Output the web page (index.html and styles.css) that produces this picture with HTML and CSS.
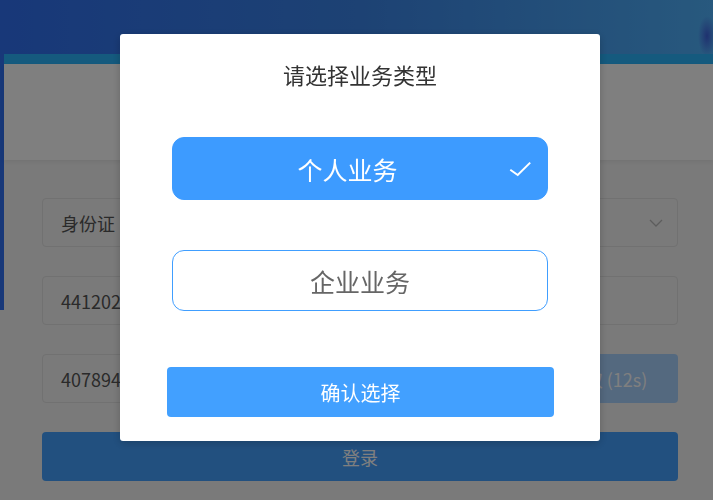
FILE: index.html
```html
<!DOCTYPE html>
<html lang="zh-CN">

<head>
    <meta charset="UTF-8">
    <meta name="viewport" content="width=device-width, initial-scale=1.0">
    <title>登录 - 选择业务类型</title>
    <link rel="stylesheet" href="styles.css">
</head>

<body>
    <div class="page">
        <div class="card">
            <div class="card_head"></div>
            <form class="login_form">
                <div class="field field_select">
                    <span>身份证</span>
                    <svg class="chevron" width="14" height="8" viewBox="0 0 14 8">
                        <polyline points="1,1 7,7 13,1" fill="none" stroke="#bbbbbb" stroke-width="1.3" />
                    </svg>
                </div>
                <div class="field">
                    <span>441202199001011234</span>
                </div>
                <div class="code_row">
                    <div class="field">
                        <span>407894</span>
                    </div>
                    <button type="button" class="code_btn">重新获取 (12s)</button>
                </div>
                <button type="button" class="login_btn">登录</button>
            </form>
        </div>
    </div>

    <!-- business type dialog -->
    <div class="overlay">
        <div class="dialog">
            <h2 class="dialog_title">请选择业务类型</h2>
            <div class="option option_active">
                个人业务
                <svg class="check" width="22" height="16" viewBox="0 0 22 16">
                    <polyline points="1.3,8.7 8.7,14 21.2,1.6" fill="none" stroke="#ffffff" stroke-width="2" />
                </svg>
            </div>
            <div class="option">企业业务</div>
            <button type="button" class="confirm_btn">确认选择</button>
        </div>
    </div>
</body>

</html>
```

FILE: styles.css
```css
/* Reset some default browser styles */
body,
html {
    margin: 0;
    padding: 0;
    font-family: "Microsoft YaHei", "Noto Sans CJK SC", sans-serif;
    height: 100%;
    overflow: hidden;
}

.page {
    height: 100%;
    background:
        radial-gradient(ellipse 9px 20px at 707px 36px, rgba(60, 90, 220, 0.9) 0%, rgba(70, 120, 230, 0.6) 55%, rgba(80, 176, 252, 0) 100%) no-repeat,
        linear-gradient(90deg, #3070f2 0%, #3a84e8 50%, #50b2fc 100%) top / 100% 310px no-repeat,
        #f4f4f4;
    padding-top: 54px;
    box-sizing: border-box;
}

.card {
    margin-left: 4px;
    background: #f4f4f4;
    border-top: 10px solid #2ab4fc;
    height: 436px;
}

.card_head {
    height: 96px;
    background: #ffffff;
    box-shadow: 0 2px 4px rgba(0, 0, 0, 0.06);
}

.login_form {
    display: flex;
    flex-direction: column;
    gap: 29px;
    padding: 38px 35px 0 38px;
}

.field {
    height: 49px;
    box-sizing: border-box;
    border: 1px solid #e2e2e2;
    border-radius: 4px;
    display: flex;
    align-items: center;
    justify-content: space-between;
    padding: 0 14px 0 18px;
    font-size: 18px;
    color: #555555;
}

.code_row {
    display: flex;
    gap: 10px;
}

.code_row .field {
    flex: 1;
}

.code_btn {
    width: 200px;
    height: 49px;
    border: none;
    border-radius: 4px;
    background: #a8d2ff;
    color: #ffffff;
    font-family: inherit;
    font-size: 18px;
    padding: 0 0 0 22px;
}

.login_btn {
    height: 49px;
    border: none;
    border-radius: 4px;
    background: #44a0fe;
    color: #ffffff;
    font-family: inherit;
    font-size: 18px;
}

/* dialog */
.overlay {
    position: fixed;
    inset: 0;
    background: rgba(0, 0, 0, 0.5);
    display: flex;
    justify-content: center;
    align-items: flex-start;
    padding: 34px 0 0 7px;
}

.dialog {
    width: 480px;
    height: 407px;
    box-sizing: border-box;
    background: #ffffff;
    border-radius: 3px;
    box-shadow: 0 2px 8px rgba(0, 0, 0, 0.2);
    display: flex;
    flex-direction: column;
    align-items: center;
    padding-top: 25px;
}

.dialog_title {
    margin: 0 0 48px;
    font-size: 22px;
    line-height: 30px;
    font-weight: 400;
    color: #333333;
}

.option {
    position: relative;
    width: 376px;
    height: 61px;
    box-sizing: border-box;
    border: 1px solid #409eff;
    border-radius: 12px;
    display: flex;
    justify-content: center;
    align-items: center;
    font-size: 25px;
    color: #666666;
    margin-bottom: 56px;
}

.option_active {
    height: 63px;
    background: #3d9bff;
    border-color: #3d9bff;
    color: #ffffff;
    margin-bottom: 50px;
    padding-right: 25px;
}

.check {
    position: absolute;
    right: 16px;
    top: 23px;
}

.confirm_btn {
    width: 387px;
    height: 50px;
    border: none;
    border-radius: 4px;
    background: #42a0ff;
    color: #ffffff;
    font-family: inherit;
    font-size: 20px;
    margin-left: 1px;
}
```
